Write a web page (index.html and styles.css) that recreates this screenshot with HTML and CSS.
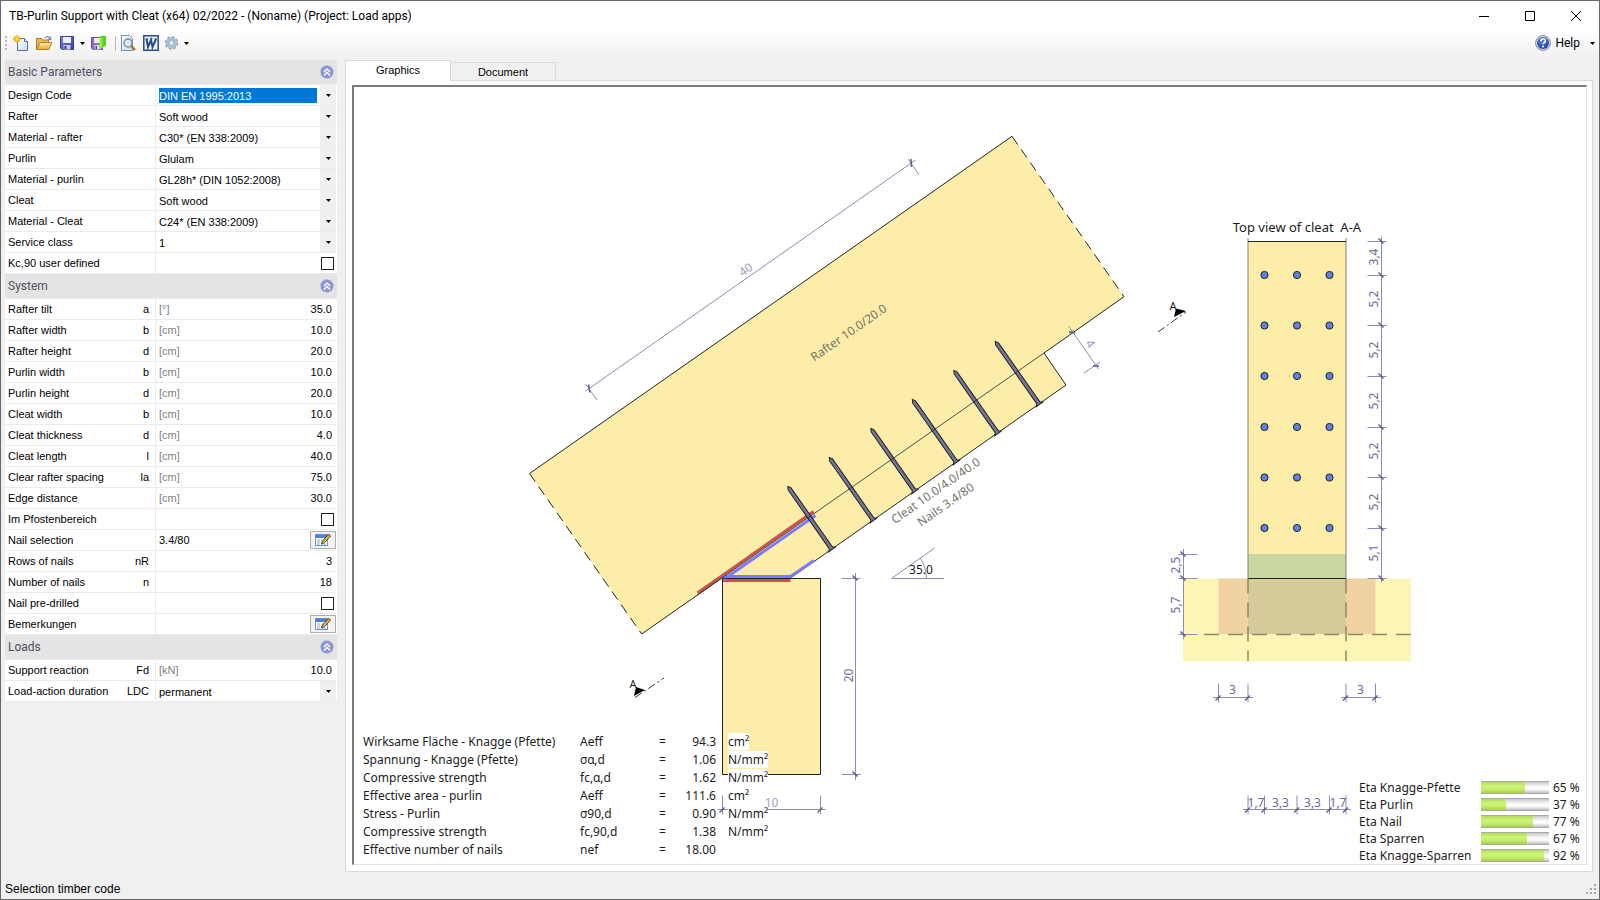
FILE: index.html
```html
<!DOCTYPE html>
<html lang="en">
<head>
<meta charset="utf-8">
<title>TB-Purlin Support with Cleat</title>
<link rel="stylesheet" href="styles.css">
</head>
<body>
<svg class="defs" aria-hidden="true">
  <defs>
    <linearGradient id="gPage" x1="0" y1="0" x2="1" y2="1"><stop offset="0" stop-color="#fff"/><stop offset="1" stop-color="#c9dcf0"/></linearGradient>
    <linearGradient id="gFolder" x1="0" y1="0" x2="0" y2="1"><stop offset="0" stop-color="#ffe9a8"/><stop offset="1" stop-color="#e8a92c"/></linearGradient>
    <linearGradient id="gDisk" x1="0" y1="0" x2="1" y2="1"><stop offset="0" stop-color="#7d86e6"/><stop offset="1" stop-color="#2e389c"/></linearGradient>
    <radialGradient id="gHelp" cx=".4" cy=".3" r=".8"><stop offset="0" stop-color="#5d86e6"/><stop offset="1" stop-color="#173a9c"/></radialGradient>
    <symbol id="iCollapse" viewBox="0 0 14 14"><circle cx="7" cy="7" r="6.5" fill="#8f95d0"/><path d="M1 5a6.3 6.3 0 0 1 5-4.3M1 9a6.3 6.3 0 0 0 3 3.5" stroke="#7fb4dc" fill="none"/><path d="M4 7l3-3 3 3M4 10.500l3-3 3 3" stroke="#fff" stroke-width="1.400" fill="none"/></symbol>
    <symbol id="iEdit" viewBox="0 0 16 14"><rect x=".5" y="1.500" width="12" height="11" fill="#fff" stroke="#6f8fc8"/><path d="M1 2h11v3H1z" fill="#4f7fd0"/><path d="M2 7h3M2 9h3M2 11h3M6 7h4M6 9h3M6 11h5" stroke="#8ea6d6"/><path d="M6.500 11l1-3 6-6.500 2 1.800-6.200 6.500z" fill="#d9b13c" stroke="#3c3a2c" stroke-width=".8"/><path d="M13 1.800l1-1 1.700 1.600-1 1z" fill="#d0503a"/></symbol>
    <symbol id="iDrop" viewBox="0 0 5 3"><path d="M0 0h5L2.500 3z" fill="#000"/></symbol>
    <g id="tickV"><path d="M-14 0H5"/><path class="slash" d="M-3-3L2 2"/></g>
    <g id="tickL"><path d="M-5 0H14"/><path class="slash" d="M-3-3L2 2"/></g>
    <g id="tickH"><path d="M0-14V5"/><path class="slash" d="M-3 3L2-2"/></g>
    <g id="nail"><path d="M0-77L1.800-74V-2L4 0H-4L-1.800-2V-74Z"/></g>
    <g id="row3"><circle cx="1264.500" r="3.600"/><circle cx="1297" r="3.600"/><circle cx="1329.500" r="3.600"/></g>
  </defs>
</svg>
<div class="window">
  <header class="titlebar">
    <h1 class="title">TB-Purlin Support with Cleat (x64) 02/2022 - (Noname) (Project: Load apps)</h1>
    <div class="winbtns">
      <button type="button" aria-label="Minimize"><svg viewBox="0 0 10 10"><path d="M0 5.500h10"/></svg></button>
      <button type="button" aria-label="Maximize"><svg viewBox="0 0 10 10"><path d="M.5.5h9v9h-9z"/></svg></button>
      <button type="button" aria-label="Close"><svg viewBox="0 0 10 10"><path d="M0 0l10 10M10 0L0 10"/></svg></button>
    </div>
  </header>

  <nav class="toolbar" aria-label="Main">
    <span class="grip"></span>
    <button type="button" class="tool" aria-label="New"><svg viewBox="0 0 16 16"><path d="M4.500 3.500h7l3 3v9h-10z" fill="url(#gPage)" stroke="#5a6f92"/><path d="M11.500 3.500v3h3" fill="#fff" stroke="#5a6f92"/><path d="M4 0v8M0 4h8M1.200 1.200l5.600 5.600M6.800 1.200L1.200 6.800" stroke="#f5a800" stroke-width="1.300"/><circle cx="4" cy="4" r="1.700" fill="#ffe04a"/></svg></button>
    <button type="button" class="tool" aria-label="Open"><svg viewBox="0 0 16 16"><path d="M.5 14.500v-11h5l1 1.500h6v3" fill="#e7bd5c" stroke="#a9812c"/><path d="M.8 14.500l3-7h12l-3 7z" fill="url(#gFolder)" stroke="#a9812c"/><path d="M9 3c1.500-2 4-2 5 1M14.500 1.500V4.500h-3" fill="none" stroke="#6d8bb3" stroke-width="1.200"/></svg></button>
    <button type="button" class="tool" aria-label="Save"><svg viewBox="0 0 16 16"><path d="M1.500 1.500h13v13H3l-1.500-1.500z" fill="url(#gDisk)" stroke="#3a3f96"/><path d="M4 2h8v6H4z" fill="#f0f3ff"/><path d="M4.500 10h7v4.500h-7z" fill="#c8cde6"/><path d="M5.500 11h2v3h-2z" fill="#30388c"/></svg></button>
    <button type="button" class="drop" aria-label="Save options"><svg><use href="#iDrop"/></svg></button>
    <button type="button" class="tool" aria-label="Save and close"><svg viewBox="0 0 16 16"><path d="M.5 2.500h11v12H2L.5 13z" fill="#8a6cc0" stroke="#6a4aa0"/><path d="M3 3h6v5H3z" fill="#eef"/><path d="M3.500 10h6v4.500h-6z" fill="#ddd6ee"/><path d="M4.500 11H6v3H4.500z" fill="#543c8c"/><path d="M8.500 1h6.500v9.500l-4.500 3V3.500z" fill="#58d018"/><path d="M8.500 1l3 2v10.500l-3-2z" fill="#8aee3c"/></svg></button>
    <span class="sep"></span>
    <button type="button" class="tool" aria-label="Preview"><svg viewBox="0 0 16 16"><path d="M1.500.5h8l3 3v12h-11z" fill="url(#gPage)" stroke="#7d8eab"/><circle cx="8" cy="8" r="4" fill="#d7ecfa" stroke="#7b8796" stroke-width="1.300"/><path d="M11 11l4 4" stroke="#b9752c" stroke-width="2.500"/></svg></button>
    <button type="button" class="tool" aria-label="Word"><svg viewBox="0 0 16 16"><path d="M.8.8h14.400v14.400H.8z" fill="#eef3fc" stroke="#274b8e" stroke-width="1.500"/><path d="M3.500 4l1.500 8L8 5l1.500 7L13 4" fill="none" stroke="#274b8e" stroke-width="2"/><path d="M2.500 4h3M7 4h2.500M11.500 4h2.500" stroke="#274b8e"/></svg></button>
    <button type="button" class="tool gear" aria-label="Settings"><svg viewBox="0 0 16 16"><circle cx="7.500" cy="8" r="5.800" fill="none" stroke="#8b9cb0" stroke-width="2" stroke-dasharray="2.500 2"/><circle cx="7.500" cy="8" r="4.200" fill="none" stroke="#a9bed2" stroke-width="3.200"/><circle cx="7.500" cy="8" r="2.300" fill="#f6f8fa" stroke="#8799ac" stroke-width=".8"/></svg></button>
    <button type="button" class="drop" aria-label="Settings options"><svg><use href="#iDrop"/></svg></button>
    <span class="spacer"></span>
    <button type="button" class="help"><svg class="helpico" viewBox="0 0 16 16"><circle cx="8" cy="8" r="7.400" fill="#d8dae0" stroke="#878a92"/><circle cx="8" cy="8" r="6" fill="url(#gHelp)"/><path d="M5.800 6.300c0-3 4.600-3 4.600-.3 0 1.600-2.200 1.700-2.200 3.300" fill="none" stroke="#fff" stroke-width="1.600"/><circle cx="8.100" cy="11.600" r="1" fill="#fff"/></svg>Help</button>
    <button type="button" class="drop last" aria-label="Help options"><svg><use href="#iDrop"/></svg></button>
  </nav>

  <main class="main">
    <form class="panel">
      <section>
        <h2 class="group">Basic Parameters<button type="button" aria-label="Collapse Basic Parameters"><svg><use href="#iCollapse"/></svg></button></h2>
        <div class="row"><label for="code">Design Code</label><div class="pick active"><select id="code"><option>DIN EN 1995:2013</option></select><svg class="arrow"><use href="#iDrop"/></svg></div></div>
        <div class="row"><label for="raf">Rafter</label><div class="pick"><select id="raf"><option>Soft wood</option></select><svg class="arrow"><use href="#iDrop"/></svg></div></div>
        <div class="row"><label for="mraf">Material - rafter</label><div class="pick"><select id="mraf"><option>C30* (EN 338:2009)</option></select><svg class="arrow"><use href="#iDrop"/></svg></div></div>
        <div class="row"><label for="pur">Purlin</label><div class="pick"><select id="pur"><option>Glulam</option></select><svg class="arrow"><use href="#iDrop"/></svg></div></div>
        <div class="row"><label for="mpur">Material - purlin</label><div class="pick"><select id="mpur"><option>GL28h* (DIN 1052:2008)</option></select><svg class="arrow"><use href="#iDrop"/></svg></div></div>
        <div class="row"><label for="cle">Cleat</label><div class="pick"><select id="cle"><option>Soft wood</option></select><svg class="arrow"><use href="#iDrop"/></svg></div></div>
        <div class="row"><label for="mcle">Material - Cleat</label><div class="pick"><select id="mcle"><option>C24* (EN 338:2009)</option></select><svg class="arrow"><use href="#iDrop"/></svg></div></div>
        <div class="row"><label for="svc">Service class</label><div class="pick"><select id="svc"><option>1</option></select><svg class="arrow"><use href="#iDrop"/></svg></div></div>
        <div class="row"><label for="kc">Kc,90 user defined</label><div class="val"><input type="checkbox" id="kc"></div></div>
      </section>
      <section>
        <h2 class="group">System<button type="button" aria-label="Collapse System"><svg><use href="#iCollapse"/></svg></button></h2>
        <div class="row"><label for="s1">Rafter tilt<span>a</span></label><div class="val"><span class="unit">[°]</span><input type="text" id="s1" value="35.0"></div></div>
        <div class="row"><label for="s2">Rafter width<span>b</span></label><div class="val"><span class="unit">[cm]</span><input type="text" id="s2" value="10.0"></div></div>
        <div class="row"><label for="s3">Rafter height<span>d</span></label><div class="val"><span class="unit">[cm]</span><input type="text" id="s3" value="20.0"></div></div>
        <div class="row"><label for="s4">Purlin width<span>b</span></label><div class="val"><span class="unit">[cm]</span><input type="text" id="s4" value="10.0"></div></div>
        <div class="row"><label for="s5">Purlin height<span>d</span></label><div class="val"><span class="unit">[cm]</span><input type="text" id="s5" value="20.0"></div></div>
        <div class="row"><label for="s6">Cleat width<span>b</span></label><div class="val"><span class="unit">[cm]</span><input type="text" id="s6" value="10.0"></div></div>
        <div class="row"><label for="s7">Cleat thickness<span>d</span></label><div class="val"><span class="unit">[cm]</span><input type="text" id="s7" value="4.0"></div></div>
        <div class="row"><label for="s8">Cleat length<span>l</span></label><div class="val"><span class="unit">[cm]</span><input type="text" id="s8" value="40.0"></div></div>
        <div class="row"><label for="s9">Clear rafter spacing<span>la</span></label><div class="val"><span class="unit">[cm]</span><input type="text" id="s9" value="75.0"></div></div>
        <div class="row"><label for="s10">Edge distance</label><div class="val"><span class="unit">[cm]</span><input type="text" id="s10" value="30.0"></div></div>
        <div class="row"><label for="s11">Im Pfostenbereich</label><div class="val"><input type="checkbox" id="s11"></div></div>
        <div class="row"><label for="s12">Nail selection</label><div class="val"><input type="text" class="left" id="s12" value="3.4/80"><button type="button" class="edit" aria-label="Select nail"><svg><use href="#iEdit"/></svg></button></div></div>
        <div class="row"><label for="s13">Rows of nails<span>nR</span></label><div class="val"><input type="text" id="s13" value="3"></div></div>
        <div class="row"><label for="s14">Number of nails<span>n</span></label><div class="val"><input type="text" id="s14" value="18"></div></div>
        <div class="row"><label for="s15">Nail pre-drilled</label><div class="val"><input type="checkbox" id="s15"></div></div>
        <div class="row"><label for="s16">Bemerkungen</label><div class="val"><button type="button" id="s16" class="edit" aria-label="Edit Bemerkungen"><svg><use href="#iEdit"/></svg></button></div></div>
      </section>
      <section>
        <h2 class="group">Loads<button type="button" aria-label="Collapse Loads"><svg><use href="#iCollapse"/></svg></button></h2>
        <div class="row"><label for="l1">Support reaction<span>Fd</span></label><div class="val"><span class="unit">[kN]</span><input type="text" id="l1" value="10.0"></div></div>
        <div class="row"><label for="l2">Load-action duration<span>LDC</span></label><div class="pick"><select id="l2"><option>permanent</option></select><svg class="arrow"><use href="#iDrop"/></svg></div></div>
      </section>
    </form>

    <section class="view">
      <div class="tabs" role="tablist">
        <button type="button" role="tab" aria-selected="true" class="tab current">Graphics</button>
        <button type="button" role="tab" aria-selected="false" class="tab">Document</button>
      </div>
      <div class="page">
        <div class="canvas">
          <svg class="drawing" viewBox="354 87 1232 777" role="img" aria-label="Purlin support with cleat">
            <!-- rafter -->
            <path class="wood" d="M529.500 473.500L1012 136.300 1124 296.700 641.700 634z"/>
            <path class="edge" d="M529.500 473.500L1012 136.300M641.700 634L722.500 577.500M1044 353L1124 296.700"/>
            <path class="edge dash" d="M529.500 473.500L641.700 634M1012 136.300L1124 296.700"/>
            <!-- purlin -->
            <path class="wood edge" d="M722.500 578.500h98v196h-98z"/>
            <!-- cleat -->
            <path class="wood" d="M722.500 577.500L1044 353 1066 385 790.500 577.500z"/>
            <path class="edge" d="M1044 353L1066 385 790.500 578"/>
            <g class="stress">
              <path class="red" d="M697.500 593L813.500 511.500M723 580.500h67.500"/>
              <path class="blue" d="M723.500 579.500L815.500 515.500M722.500 576.500h68L814 560.500"/>
            </g>
            <path class="edge thin" d="M722.500 578.500h98M697.500 595L722.500 577.500"/>
            <g class="nails">
              <use href="#nail" transform="translate(832 549.500) rotate(-35)"/>
              <use href="#nail" transform="translate(873.500 520.500) rotate(-35)"/>
              <use href="#nail" transform="translate(915 491.500) rotate(-35)"/>
              <use href="#nail" transform="translate(956.500 462.500) rotate(-35)"/>
              <use href="#nail" transform="translate(998 433.500) rotate(-35)"/>
              <use href="#nail" transform="translate(1039.500 404.500) rotate(-35)"/>
            </g>
            <path class="edge thin" d="M722.500 577.500L1044 353"/>
            <!-- dimensions, side view -->
            <g class="dim">
              <path d="M585.500 391L915.500 160M585.500 384l11.500 16M908 159l11 15.500M1068.500 326l30 43M1084 373l16-11M1069 333.500l5-3.500"/>
              <path class="slash" d="M588.500 384.500l1.500 8M911 159l.5 8M1069 332l6 1M1093 366l6 0"/>
              <path d="M855.500 573v207"/>
              <use href="#tickV" x="855.500" y="578.500"/><use href="#tickV" x="855.500" y="774.500"/>
              <path d="M717.500 809.500h108"/>
              <use href="#tickH" x="722.500" y="809.500"/><use href="#tickH" x="820.500" y="809.500"/>
              <path d="M891.500 578.500H944M891.500 578.500L934.500 548M920 557.500q6 9 6.500 21"/>
            </g>
            <g class="dimtext">
              <text class="pale" transform="translate(748 273) rotate(-35)">40</text>
              <text class="pale" transform="translate(1087 346) rotate(55)">4</text>
              <text transform="translate(853 675.500) rotate(-90)">20</text>
              <text class="pale" x="771.500" y="807">10</text>
            </g>
            <g class="note">
              <text class="grey" transform="translate(851 336) rotate(-35)">Rafter 10.0/20.0</text>
              <text class="grey" transform="translate(938 494) rotate(-35)">Cleat 10.0/4.0/40.0</text>
              <text class="grey" transform="translate(948 508) rotate(-35)">Nails 3.4/80</text>
              <text x="921" y="574">35.0</text>
              <text class="heading" x="1297" y="232" xml:space="preserve">Top view of cleat  A-A</text>
              <text class="small" x="633" y="688">A</text>
              <text class="small" x="1173" y="310">A</text>
            </g>
            <path class="cut" d="M635 697.500l29-19.500M1158 332l28-20"/>
            <path d="M636 687l9 3-11 6zM1176 308.500l10 2.500-12 6z"/>
            <!-- top view -->
            <path fill="#fcf6b6" d="M1183 578.500h228v83h-228z"/>
            <path fill="#f1d3a3" d="M1218.500 578.500h157V634h-157z"/>
            <path fill="#d6cb9b" d="M1248 578.500h98V634h-98z"/>
            <path class="wood" d="M1248 241.500h98V554h-98z"/>
            <path fill="#c9d69f" d="M1248 554h98v24.500h-98z"/>
            <path class="edge soft" d="M1248 238v340.500M1346 238v340.500"/>
            <path class="edge" d="M1248 241.500h98M1248 578.500h98"/>
            <path class="hidden" d="M1248 578.500V661M1346 578.500V661M1411 634.500H1197"/>
            <g class="holes">
              <use href="#row3" y="275"/><use href="#row3" y="325.500"/><use href="#row3" y="376"/>
              <use href="#row3" y="427"/><use href="#row3" y="477.500"/><use href="#row3" y="528"/>
            </g>
            <g class="dim">
              <path d="M1381.500 236.500V582.500"/>
              <use href="#tickV" x="1381.500" y="241.500"/><use href="#tickV" x="1381.500" y="275.500"/><use href="#tickV" x="1381.500" y="325.500"/><use href="#tickV" x="1381.500" y="376.500"/><use href="#tickV" x="1381.500" y="427.500"/><use href="#tickV" x="1381.500" y="477.500"/><use href="#tickV" x="1381.500" y="528.500"/><use href="#tickV" x="1381.500" y="578.500"/>
              <path d="M1183.500 549v90"/>
              <use href="#tickL" x="1183.500" y="554.500"/><use href="#tickL" x="1183.500" y="578.500"/><use href="#tickL" x="1183.500" y="634.500"/>
              <path d="M1213 697.500h40M1341 697.500h40M1243 809.500h108"/>
              <use href="#tickH" x="1218.500" y="697.500"/><use href="#tickH" x="1248" y="697.500"/><use href="#tickH" x="1346" y="697.500"/><use href="#tickH" x="1375.500" y="697.500"/>
              <use href="#tickH" x="1248" y="809.500"/><use href="#tickH" x="1264.500" y="809.500"/><use href="#tickH" x="1297" y="809.500"/><use href="#tickH" x="1329.500" y="809.500"/><use href="#tickH" x="1346" y="809.500"/>
            </g>
            <g class="dimtext">
              <text transform="translate(1378 257) rotate(-90)">3,4</text>
              <text transform="translate(1378 299) rotate(-90)">5,2</text>
              <text transform="translate(1378 350) rotate(-90)">5,2</text>
              <text transform="translate(1378 401) rotate(-90)">5,2</text>
              <text transform="translate(1378 451) rotate(-90)">5,2</text>
              <text transform="translate(1378 502) rotate(-90)">5,2</text>
              <text transform="translate(1378 553) rotate(-90)">5,1</text>
              <text transform="translate(1180 565) rotate(-90)">2,5</text>
              <text transform="translate(1180 605) rotate(-90)">5,7</text>
              <text x="1232.500" y="694">3</text><text x="1360.500" y="694">3</text>
              <text x="1256" y="807">1,7</text><text x="1280.500" y="807">3,3</text><text x="1312.500" y="807">3,3</text><text x="1338" y="807">1,7</text>
            </g>
          </svg>

          <table class="results">
            <tbody>
              <tr><th scope="row">Wirksame Fläche - Knagge (Pfette)</th><td class="sym">Aeff</td><td class="eq">=</td><td class="num">94.3</td><td><span>cm²</span></td></tr>
              <tr><th scope="row">Spannung - Knagge (Pfette)</th><td class="sym">σα,d</td><td class="eq">=</td><td class="num">1.06</td><td><span>N/mm²</span></td></tr>
              <tr><th scope="row">Compressive strength</th><td class="sym">fc,α,d</td><td class="eq">=</td><td class="num">1.62</td><td><span>N/mm²</span></td></tr>
              <tr><th scope="row">Effective area - purlin</th><td class="sym">Aeff</td><td class="eq">=</td><td class="num">111.6</td><td><span>cm²</span></td></tr>
              <tr><th scope="row">Stress - Purlin</th><td class="sym">σ90,d</td><td class="eq">=</td><td class="num">0.90</td><td><span>N/mm²</span></td></tr>
              <tr><th scope="row">Compressive strength</th><td class="sym">fc,90,d</td><td class="eq">=</td><td class="num">1.38</td><td><span>N/mm²</span></td></tr>
              <tr><th scope="row">Effective number of nails</th><td class="sym">nef</td><td class="eq">=</td><td class="num">18.00</td><td></td></tr>
            </tbody>
          </table>

          <table class="etas">
            <tbody>
              <tr><th scope="row">Eta Knagge-Pfette</th><td><div class="bar"><div style="width:65%"></div></div></td><td class="pct">65 %</td></tr>
              <tr><th scope="row">Eta Purlin</th><td><div class="bar"><div style="width:37%"></div></div></td><td class="pct">37 %</td></tr>
              <tr><th scope="row">Eta Nail</th><td><div class="bar"><div style="width:77%"></div></div></td><td class="pct">77 %</td></tr>
              <tr><th scope="row">Eta Sparren</th><td><div class="bar"><div style="width:67%"></div></div></td><td class="pct">67 %</td></tr>
              <tr><th scope="row">Eta Knagge-Sparren</th><td><div class="bar"><div style="width:92%"></div></div></td><td class="pct">92 %</td></tr>
            </tbody>
          </table>
        </div>
      </div>
    </section>
  </main>

  <footer class="status">
    <span>Selection timber code</span>
    <svg class="sizer" viewBox="0 0 10 10"><path d="M8 0h2v2H8zM8 4h2v2H8zM4 4h2v2H4zM8 8h2v2H8zM4 8h2v2H4zM0 8h2v2H0z"/></svg>
  </footer>
</div>
</body>
</html>
```

FILE: styles.css
```css
* { box-sizing: border-box; }

body {
  margin: 0;
  background: #f0f0f0;
  color: #000;
  font: 11px/14px "Liberation Sans", Arial, sans-serif;
}

button, input, select { font: inherit; color: inherit; margin: 0; }
button { padding: 0; border: 0; background: none; }
.defs { position: absolute; width: 0; height: 0; }

.window {
  display: flex;
  flex-direction: column;
  height: 100vh;
  min-height: 760px;
  border: 1px solid #686868;
}

/* title bar */
.titlebar {
  display: flex;
  align-items: center;
  justify-content: space-between;
  height: 30px;
  padding-left: 8px;
  background: #fff;
}
.title { margin: 0; font: 12px/16px Roboto, sans-serif; }
.winbtns { display: flex; }
.winbtns button { width: 46px; height: 28px; display: grid; place-items: center; }
.winbtns svg { width: 10px; height: 10px; fill: none; stroke: #000; }

/* toolbar */
.toolbar {
  display: flex;
  align-items: center;
  height: 28px;
  padding: 0 2px 4px 4px;
  background: linear-gradient(#fdfdfd, #f0f0f0);
}
.grip {
  width: 2px;
  height: 14px;
  margin-right: 2px;
  background: repeating-linear-gradient(#b8b8b8 0 2px, transparent 2px 4px);
}
.tool { width: 23px; height: 20px; display: grid; place-items: center; }
.tool svg { width: 16px; height: 16px; }
.tool.gear { width: 20px; }
.drop { width: 9px; height: 20px; display: grid; place-items: center; }
.drop svg { width: 5px; height: 3px; }
.sep { width: 1px; height: 15px; margin: 0 0 0 5px; background: #bdbdbd; }
.spacer { flex: 1; }
.help {
  display: flex;
  align-items: center;
  gap: 4px;
  margin-right: 8px;
  font: 12px/16px Roboto, sans-serif;
}
.helpico { width: 16px; height: 16px; }

/* main split */
.main {
  display: flex;
  flex: 1;
  gap: 8px;
  min-height: 0;
  padding: 1px 6px 7px 4px;
}
.panel { width: 332px; flex: none; }

.group {
  display: flex;
  align-items: center;
  justify-content: space-between;
  height: 25px;
  margin: 0;
  padding: 0 3px;
  border-bottom: 1px solid #ececec;
  background: #e4e4e4;
  color: #50505f;
  font: 12px/16px Roboto, sans-serif;
}
.group svg { display: block; width: 14px; height: 14px; }

.row {
  display: grid;
  grid-template-columns: 151px 1fr;
  height: 21px;
  border-bottom: 1px solid #ebebeb;
  background: #fff;
}
.row label {
  display: flex;
  align-items: center;
  justify-content: space-between;
  padding: 0 6px 0 3px;
  border-right: 1px solid #ebebeb;
}
.val {
  display: flex;
  align-items: center;
  justify-content: flex-end;
  padding: 0 1px 0 3px;
}
.unit { color: #808080; }
.val input[type="text"] {
  flex: 1;
  min-width: 0;
  height: 18px;
  padding: 0 4px 0 0;
  border: 0;
  outline: 0;
  background: none;
  text-align: right;
}
.val input.left { text-align: left; }
.val input[type="checkbox"] {
  appearance: none;
  width: 13px;
  height: 13px;
  margin-right: 2px;
  border: 1px solid #222;
  background: #fff;
}
.edit {
  display: grid;
  place-items: center;
  width: 26px;
  height: 18px;
  border: 1px solid #adadad;
  background: #f2f2f2;
}
.edit svg { width: 16px; height: 14px; }

.pick { position: relative; display: flex; }
.pick select {
  flex: 1;
  min-width: 0;
  appearance: none;
  border: 0;
  border-radius: 0;
  padding: 3px 20px 2px 3px;
  background: linear-gradient(90deg, transparent calc(100% - 17px), #f0f0f0 0 calc(100% - 1px), transparent 0);
}
.pick.active select {
  color: #fff;
  background: linear-gradient(#0078d7, #0078d7) content-box, linear-gradient(90deg, transparent calc(100% - 17px), #f0f0f0 0 calc(100% - 1px), transparent 0);
}
.arrow {
  position: absolute;
  right: 6px;
  top: 9px;
  width: 5px;
  height: 3px;
  pointer-events: none;
}

/* tabbed view */
.view { display: flex; flex: 1; flex-direction: column; min-width: 0; }
.tabs { display: flex; align-items: flex-end; height: 20px; }
.tab {
  width: 105px;
  height: 18px;
  border: 1px solid #dadada;
  border-bottom: 0;
  border-left: 0;
  background: #f0f0f0;
}
.tab.current {
  z-index: 1;
  width: 106px;
  height: 21px;
  margin-bottom: -1px;
  padding-bottom: 2px;
  border-left: 1px solid #dadada;
  background: #fff;
}
.page {
  display: flex;
  flex: 1;
  min-height: 0;
  padding: 4px 5px 6px 6px;
  border: 1px solid #dadada;
  background: #fff;
}
.canvas {
  position: relative;
  flex: 1;
  min-width: 0;
  border: 1px solid #e3e3e3;
  border-top: 2px solid #7c7c7c;
  border-left: 2px solid #7c7c7c;
  color: #1c1c1c;
  font: 12px/17px "Noto Sans", sans-serif;
}
.drawing { display: block; width: 100%; height: 100%; }

.wood { fill: #fceea8; }
.edge { stroke: #222; stroke-width: 1; }
path.edge:not(.wood) { fill: none; }
.edge.thin { stroke-opacity: .8; }
.edge.dash { stroke-dasharray: 10 6; }
.edge.soft { stroke: #86826e; }
.red { fill: none; stroke: #c9524a; stroke-width: 3; }
.blue { fill: none; stroke: #7b7bfa; stroke-width: 3; }
.nails { fill: #75759a; stroke: #222; }
.holes { fill: #6080e6; stroke: #222; }
.hidden { fill: none; stroke: #8f8968; stroke-width: 1.500; stroke-dasharray: 15 9; }
.cut { fill: none; stroke: #333; stroke-dasharray: 8 3 2 3; }
.dim { fill: none; stroke: #8c8cb2; }
.slash { stroke: #5c5c90; stroke-width: 1.500; }
.dimtext { fill: #6a6a98; text-anchor: middle; }
.note { fill: #1c1c1c; text-anchor: middle; }
.pale { fill: #a0a0be; }
.grey { fill: #77756a; }
.small { font-size: 11px; }
.heading { font-size: 13px; }

.results, .etas { position: absolute; border-collapse: collapse; }
.results th, .etas th { padding: 0; font-weight: 400; text-align: left; white-space: nowrap; }
.results td, .etas td { padding: 0; white-space: nowrap; }
.results { left: 9px; bottom: 6px; }
.results tr { height: 18px; }
.results th { width: 217px; }
.sym { width: 79px; }
.eq { width: 9px; }
.results .num { width: 48px; padding-right: 12px; text-align: right; box-sizing: content-box; }
.results span { display: block; width: max-content; height: 17px; background: #fff; }

.etas { right: 4px; bottom: 0; }
.etas tr { height: 17px; }
.etas th { width: 122px; }
.bar {
  width: 68px;
  height: 13px;
  background: linear-gradient(#a9a9a9 0 1px, #c8c8c8 1px, #f4f4f4 5px, #fff 8px, #c0c0c0 12px, #a9a9a9 12px);
}
.bar div {
  height: 13px;
  background: linear-gradient(#a8ae98 0 1px, #b2da5c 1px, #cdf47a 5px, #c8f06e 8px, #a8d04e 12px, #a8ae98 12px);
}
.etas .pct { width: 33px; padding-left: 4px; }

/* status bar */
.status {
  display: flex;
  align-items: center;
  justify-content: space-between;
  height: 20px;
  padding: 0 3px 0 4px;
  font-size: 12px;
}
.sizer { width: 10px; height: 10px; fill: #a8a8a8; }
```
